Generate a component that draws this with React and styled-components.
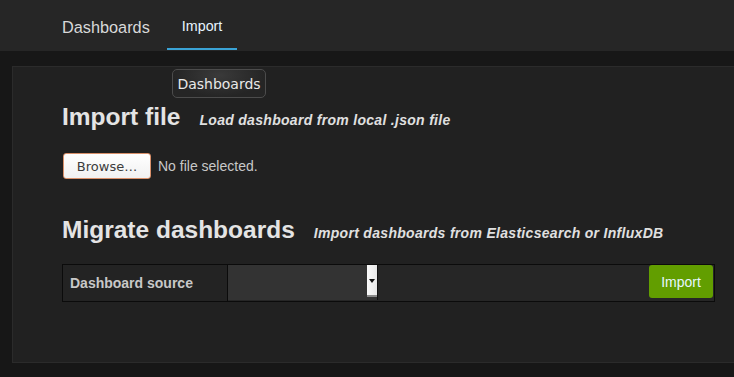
import React from "react";
import styled, { createGlobalStyle } from "styled-components";

const GlobalStyle = createGlobalStyle`
  html, body {
    margin: 0;
    padding: 0;
    background: #171717;
    overflow: hidden;
    font-family: "Liberation Sans", Arial, sans-serif;
  }
`;

export default function App() {
  return (
    <>
      <GlobalStyle />
      <NavBar>
        <NavLink>Dashboards</NavLink>
        <NavTab>Import</NavTab>
      </NavBar>
      <Panel>
        <Tooltip>Dashboards</Tooltip>
        <SectionHead>
          <Title>Import file</Title>
          <Subtitle>Load dashboard from local .json file</Subtitle>
        </SectionHead>
        <FileRow>
          <BrowseButton>Browse…</BrowseButton>
          <FileName>No file selected.</FileName>
        </FileRow>
        <SectionHead $top={36}>
          <Title>Migrate dashboards</Title>
          <Subtitle>Import dashboards from Elasticsearch or InfluxDB</Subtitle>
        </SectionHead>
        <FormRow>
          <FormLabel>Dashboard source</FormLabel>
          <SelectBox>
            <SelectArrow>
              <svg width="6" height="4" viewBox="0 0 6 4">
                <path d="M0 0 H6 L3 4 Z" fill="#111" />
              </svg>
            </SelectArrow>
          </SelectBox>
          <ImportButton>Import</ImportButton>
        </FormRow>
      </Panel>
    </>
  );
}

const NavBar = styled.div`
  display: flex;
  align-items: stretch;
  height: 51px;
  padding-left: 62px;
  background: #262626;
`;

const NavLink = styled.div`
  display: flex;
  align-items: center;
  padding-top: 3px;
  margin-right: 17px;
  font-size: 16.3px;
  color: #d8d9da;
`;

const NavTab = styled.div`
  display: flex;
  align-items: center;
  height: 45px;
  padding: 3px 15px 0;
  border-bottom: 2px solid #3aa3d6;
  font-size: 14.3px;
  color: #e6f4ff;
`;

const Panel = styled.div`
  position: relative;
  margin: 15px -20px 0 12px;
  padding: 35px 0 0 49px;
  box-sizing: border-box;
  height: 297px;
  background: #212121;
  border: 1px solid #2b2b2b;
`;

const Tooltip = styled.div`
  position: absolute;
  left: 159px;
  top: 2px;
  width: 94px;
  height: 29px;
  box-sizing: border-box;
  display: flex;
  align-items: center;
  justify-content: center;
  border: 1px solid #4c4c4c;
  border-radius: 5px;
  background: radial-gradient(ellipse at 50% 20%, #3a3a3a 0%, #252525 70%);
  font-family: "DejaVu Sans", sans-serif;
  font-size: 14px;
  color: #e8e8e8;
`;

const SectionHead = styled.div`
  display: flex;
  align-items: baseline;
  gap: 19px;
  margin-top: ${(p) => p.$top || 0}px;
  height: 30px;
`;

const Title = styled.h2`
  margin: 0;
  font-size: 24.5px;
  line-height: 30px;
  font-weight: bold;
  color: #e4e4e4;
`;

const Subtitle = styled.span`
  font-size: 14px;
  letter-spacing: 0.3px;
  font-weight: bold;
  font-style: italic;
  color: #e0e0e0;
`;

const FileRow = styled.div`
  display: flex;
  align-items: center;
  gap: 7px;
  margin-top: 21px;
  padding-left: 1px;
`;

const BrowseButton = styled.div`
  width: 88px;
  height: 26px;
  box-sizing: border-box;
  display: flex;
  align-items: center;
  justify-content: center;
  border: 1px solid #d9906a;
  border-radius: 3px;
  background: linear-gradient(#ffffff, #f1f1f1);
  font-family: "DejaVu Sans", sans-serif;
  font-size: 13px;
  color: #3c3c3c;
`;

const FileName = styled.span`
  font-size: 14px;
  color: #c8c8c8;
`;

const FormRow = styled.div`
  display: flex;
  align-items: stretch;
  width: 653px;
  height: 38px;
  box-sizing: border-box;
  margin-top: 19px;
  border: 1px solid #0b0b0b;
  background: #262626;
`;

const FormLabel = styled.div`
  display: flex;
  align-items: center;
  width: 165px;
  padding-left: 7px;
  box-sizing: border-box;
  border-right: 1px solid #0b0b0b;
  background: #232323;
  font-size: 14px;
  font-weight: bold;
  color: #c8c8c8;
`;

const SelectBox = styled.div`
  display: flex;
  justify-content: flex-end;
  align-items: flex-start;
  width: 149px;
  height: 35px;
  background: #333333;
  border-right: 1px solid #111;
`;

const SelectArrow = styled.div`
  width: 10px;
  height: 32px;
  display: flex;
  align-items: center;
  justify-content: center;
  background: linear-gradient(90deg, #fafafa, #e8e8e8);
  box-shadow: inset 0 -2px 0 #8a8a8a;
`;

const ImportButton = styled.div`
  margin: 0 1px 0 auto;
  width: 64px;
  height: 33px;
  display: flex;
  align-items: center;
  justify-content: center;
  border-radius: 3px;
  background: #629e00;
  font-size: 14px;
  color: #e6f7ff;
`;
